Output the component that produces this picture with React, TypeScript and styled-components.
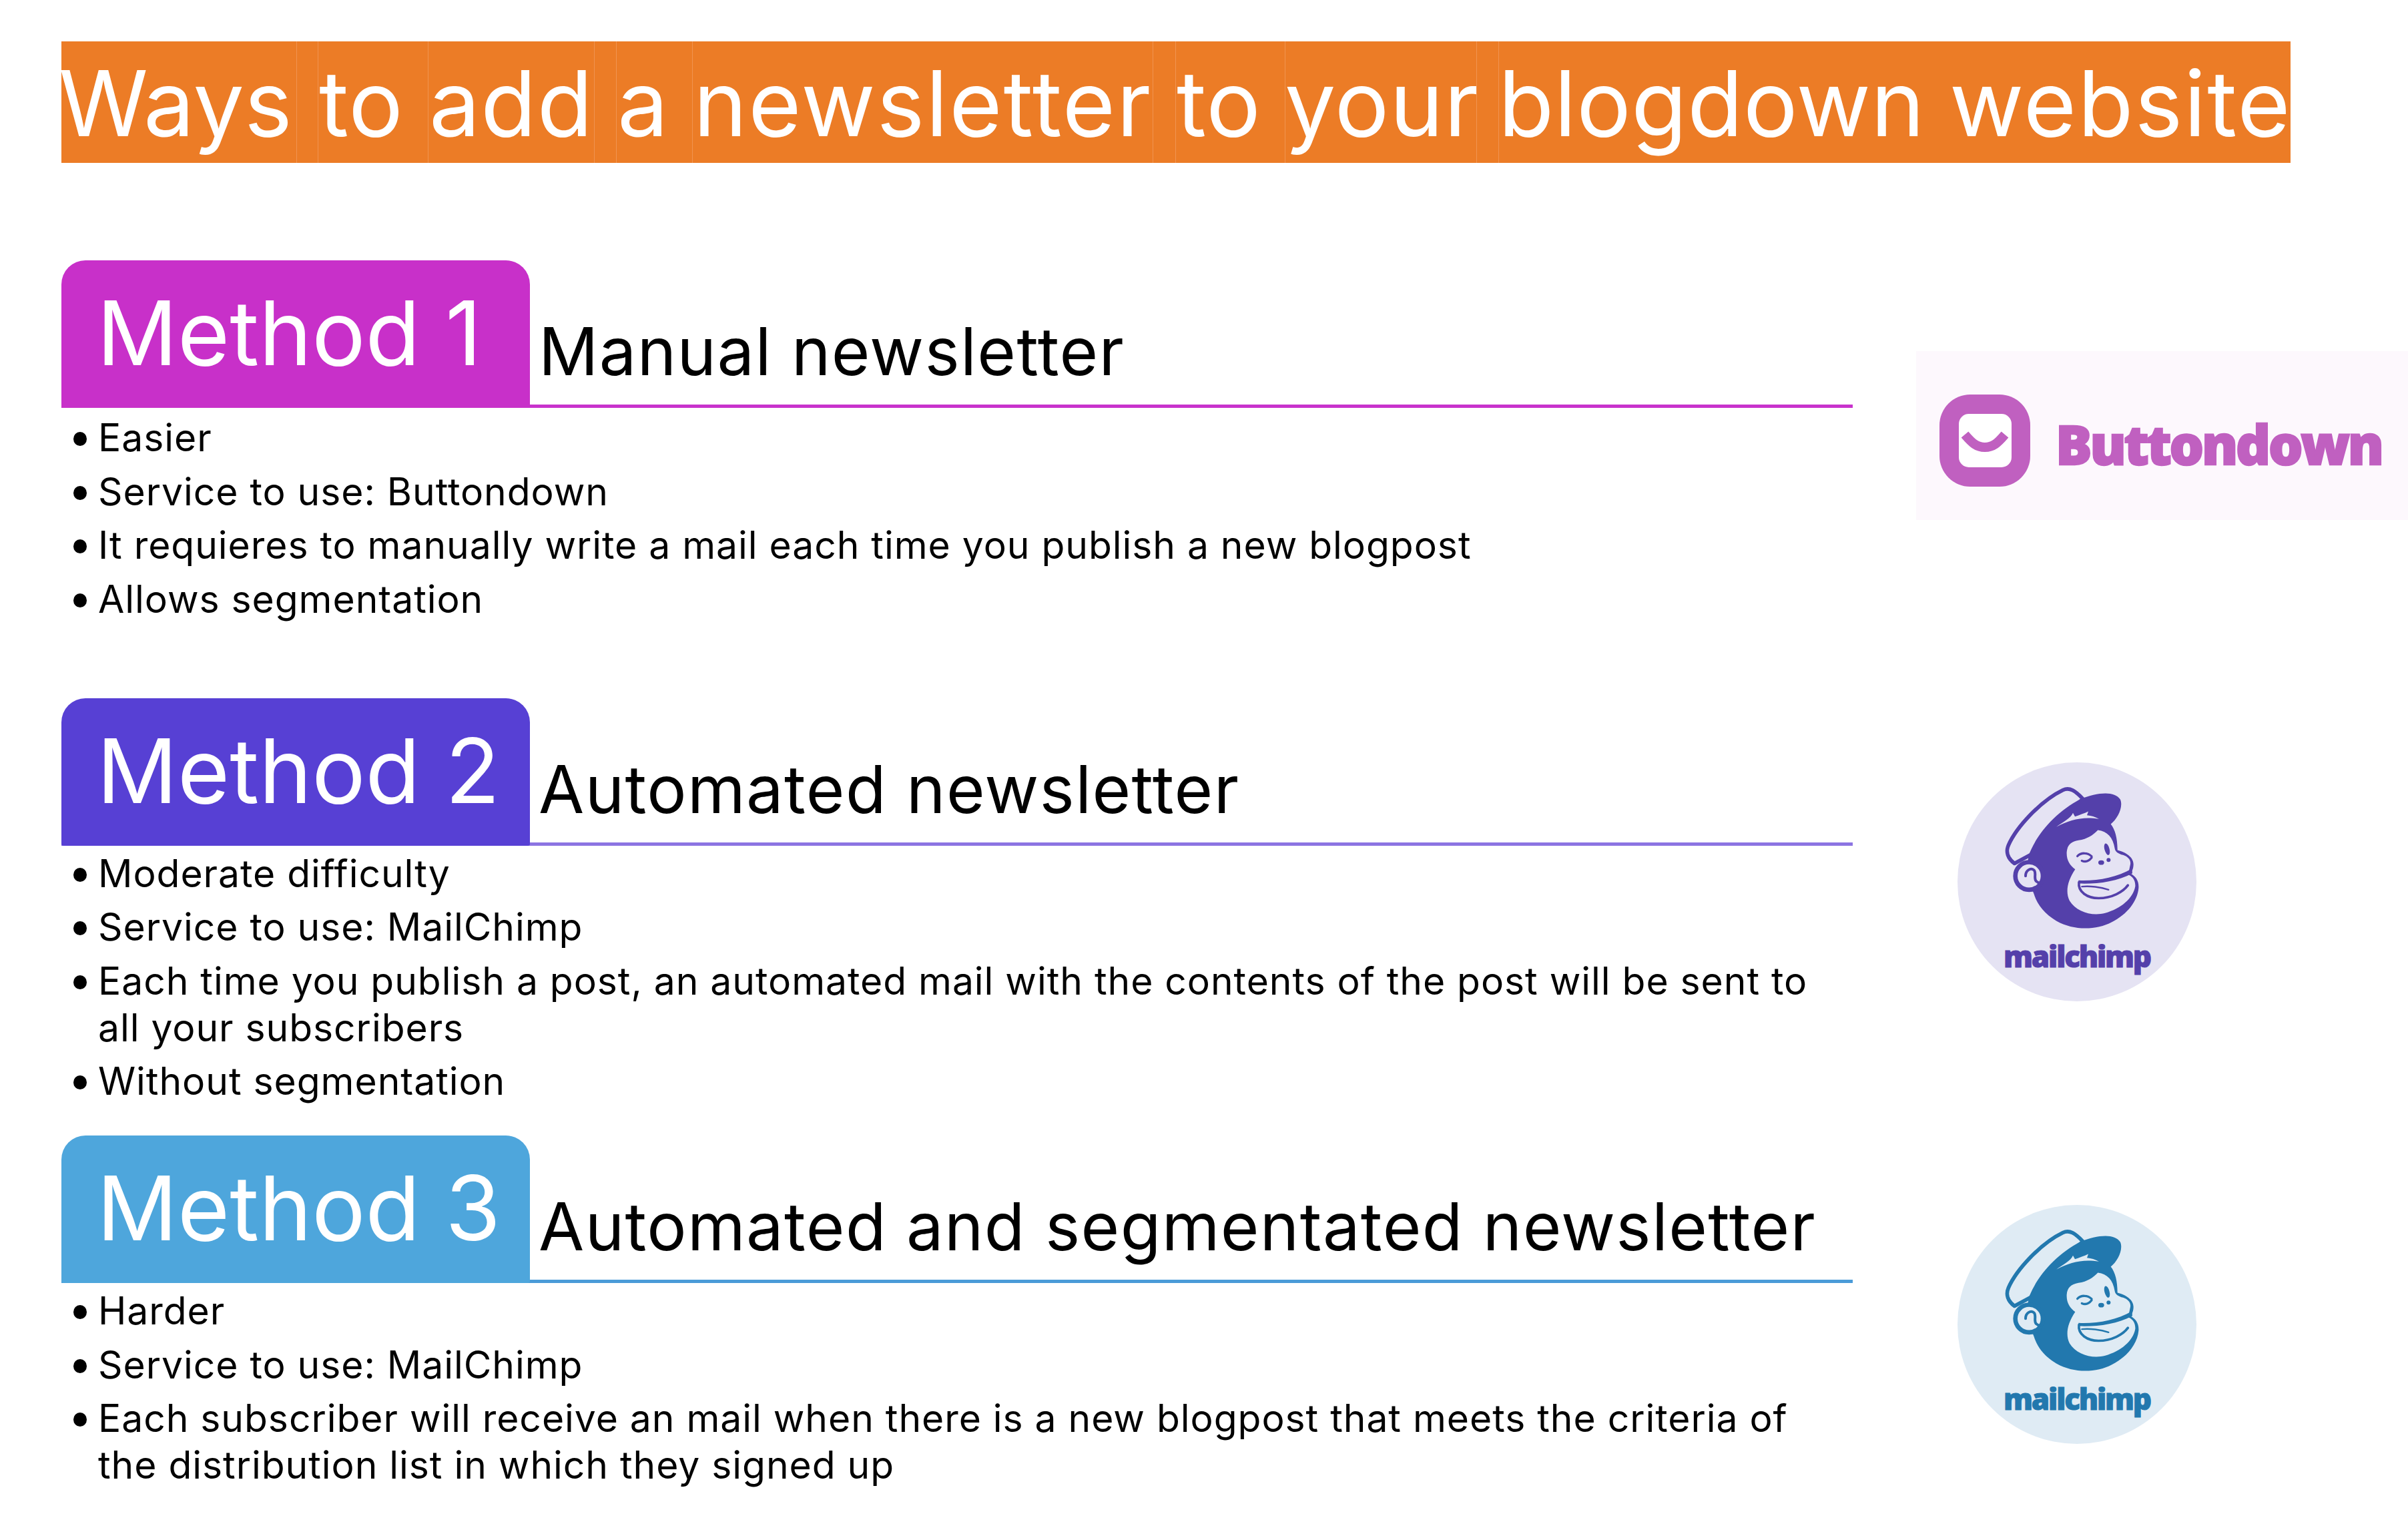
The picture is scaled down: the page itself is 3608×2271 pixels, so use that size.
import React from "react";
import styled, { createGlobalStyle } from "styled-components";

const Global = createGlobalStyle`
  html, body { margin: 0; padding: 0; background: #fff; }
  body { font-family: "Inter", "Noto Sans", sans-serif; color: #000; }
`;

const Slide = styled.main`
  width: 3608px;
  height: 2271px;
  overflow: hidden;
  padding: 62px 0 0 92px;
  box-sizing: border-box;
`;

const TitleBar = styled.h1`
  display: flex;
  width: 3340px;
  height: 182px;
  margin: 0 0 146px;
  background: #ec7c26;
  color: #fff;
  font-size: 136px;
  font-weight: 400;
  line-height: 186px;
  white-space: pre;
`;

const TitleWord = styled.span<{ $width: number; $ls: number; $indent?: number; $seam?: boolean }>`
  display: block;
  flex: none;
  width: ${(p) => p.$width}px;
  height: 182px;
  letter-spacing: ${(p) => p.$ls}px;
  text-indent: ${(p) => p.$indent ?? 0}px;
  box-shadow: ${(p) => (p.$seam === false ? "none" : "inset 1px 0 0 #f09350")};
`;

const Section = styled.section`
  display: grid;
  grid-template-columns: 2684px 832px;
  height: 655.5px;
`;

const Heading = styled.div<{ $rule: string }>`
  display: flex;
  height: 221px;
  box-sizing: border-box;
  border-bottom: 5px solid ${(p) => p.$rule};
`;

const Tab = styled.div<{ $bg: string }>`
  width: 702px;
  height: 221px;
  flex: none;
  box-sizing: border-box;
  padding-left: 53px;
  border-radius: 36px 36px 3px 3px;
  background: ${(p) => p.$bg};
  color: #fff;
  font-size: 134px;
  line-height: 216px;
  letter-spacing: 0;
  white-space: nowrap;
`;

const Subtitle = styled.h2`
  margin: 0 0 0 13px;
  padding-top: 71px;
  font-size: 99px;
  font-weight: 400;
  line-height: 130px;
  letter-spacing: 1.35px;
  white-space: nowrap;
`;

const BulletList = styled.ul<{ $top: number }>`
  width: 2600px;
  margin: ${(p) => p.$top}px 0 0;
  padding: 0 0 0 55px;
  list-style: none;
`;

const Bullet = styled.li`
  position: relative;
  font-size: 57px;
  line-height: 70px;
  margin-bottom: 10.5px;
  letter-spacing: 0.95px;
  &::before {
    content: "";
    position: absolute;
    left: -37px;
    top: 26px;
    width: 20px;
    height: 21px;
    border-radius: 50%;
    background: #000;
  }
`;

const LogoCell = styled.div<{ $top: number }>`
  display: flex;
  align-items: flex-start;
  padding-top: ${(p) => p.$top}px;
`;

const ButtondownCard = styled.div`
  display: flex;
  align-items: flex-start;
  width: 737px;
  height: 253px;
  margin-left: 95px;
  padding: 65px 0 0 35px;
  box-sizing: border-box;
  gap: 38px;
  background: #fdf8fd;
`;

const ButtondownName = styled.span`
  color: #c060c0;
  font-family: "Open Sans", "Noto Sans", sans-serif;
  font-size: 81px;
  font-weight: 800;
  letter-spacing: -3.2px;
  line-height: 81px;
  margin-top: 33px;
  -webkit-text-stroke: 2.5px #c060c0;
`;

const MailchimpBadge = styled.div<{ $bg: string; $ink: string }>`
  display: flex;
  flex-direction: column;
  align-items: center;
  width: 358px;
  height: 358px;
  margin-left: 157px;
  border-radius: 50%;
  background: ${(p) => p.$bg};
  color: ${(p) => p.$ink};
`;

const Wordmark = styled.span`
  font-family: "Open Sans", "Noto Sans", sans-serif;
  font-size: 44px;
  font-weight: 800;
  letter-spacing: -2.2px;
  line-height: 44px;
  margin-top: 12px;
  -webkit-text-stroke: 1px currentColor;
`;

const MonkeySvg = styled.svg`
  display: block;
  width: 210px;
  height: 222px;
  margin: 34px 13px 0 0;
  flex: none;
`;

const ButtondownSvg = styled.svg`
  display: block;
  width: 136px;
  height: 138px;
  flex: none;
`;

function ButtondownIcon() {
  return (
    <ButtondownSvg viewBox="0 0 136 138">
      <rect width="136" height="138" rx="46" fill="#c060c0" />
      <rect x="29" y="29" width="79" height="80" rx="15" fill="#fff" />
      <path d="M38 60 C49 73 56 79 68 79 C80 79 87 73 98 60" fill="none" stroke="#c060c0" strokeWidth="14" />
    </ButtondownSvg>
  );
}

function Monkey({ ink, bg }: { ink: string; bg: string }) {
  return (
    <MonkeySvg viewBox="300 170 630 665">
      <path d="M352 522 C322 500 312 470 325 440 C360 360 470 240 570 192 C600 178 625 195 660 232 L560 320 L430 480 Z" fill={bg} stroke={ink} strokeWidth="17" strokeLinejoin="round" />
      <path d="M650 232 C720 205 800 192 828 235 C842 270 815 322 785 345 C805 370 815 410 815 462 C855 472 887 495 887 525 C887 545 880 560 873 566 C898 580 912 600 910 632 C905 690 860 750 790 785 C720 822 620 825 540 780 C490 750 455 710 440 660 L400 560 L420 475 C460 380 540 290 650 232 Z" fill={ink} />
      <path d="M540 358 C570 335 605 320 615 295 L624 311 C645 304 665 297 684 288 L678 305 C697 307 715 312 732 322 C660 310 600 325 540 358 Z" fill={bg} />
      <path d="M587 470 C590 440 605 425 640 418 C680 412 705 395 727 372 C770 378 795 405 803 455 C805 470 820 478 840 484 C865 492 878 510 872 530 C868 550 866 560 862 572 C880 578 897 595 895 625 C885 680 830 725 760 745 C700 760 630 740 600 690 C580 650 590 600 625 548 C600 530 585 505 587 470 Z" fill={bg} />
      <ellipse cx="768" cy="458" rx="11" ry="27" transform="rotate(-15 768 458)" fill={ink} />
      <ellipse cx="742" cy="518" rx="13" ry="10" fill={ink} />
      <circle cx="775" cy="506" r="9" fill={ink} />
      <path d="M635 489 C650 472 682 472 699 490 M655 510 C672 517 688 510 699 496" fill="none" stroke={ink} strokeWidth="10" strokeLinecap="round" />
      <path d="M640 598 C720 602 810 585 880 545 L882 566 C810 605 720 615 640 612 Z" fill={ink} />
      <path d="M642 606 C636 650 680 678 730 678 C790 678 840 650 862 620" fill="none" stroke={ink} strokeWidth="11" strokeLinecap="round" />
      <path d="M655 626 C690 622 740 628 775 640" fill="none" stroke={ink} strokeWidth="7" strokeLinecap="round" />
      <circle cx="418" cy="578" r="62" fill={bg} stroke={ink} strokeWidth="20" />
      <path d="M402 578 C402 552 425 540 440 552 C452 565 437 590 450 602 C456 608 462 610 468 610" fill="none" stroke={ink} strokeWidth="12" strokeLinecap="round" />
    </MonkeySvg>
  );
}

const titleCells: { text: string; width: number; ls: number; indent?: number; seam?: boolean }[] = [
  { text: "Ways", width: 352, ls: 0, indent: -4, seam: false },
  { text: " ", width: 32, ls: 0 },
  { text: "to ", width: 165, ls: 1, indent: 2 },
  { text: "add", width: 249, ls: 1, indent: 2 },
  { text: " ", width: 33, ls: 0 },
  { text: "a ", width: 114, ls: 1, indent: 2 },
  { text: "newsletter", width: 690, ls: 2, indent: 2 },
  { text: " ", width: 34, ls: 0 },
  { text: "to ", width: 164, ls: 1, indent: 2 },
  { text: "your", width: 287, ls: 1 },
  { text: " ", width: 33, ls: 0 },
  { text: "blogdown", width: 676, ls: 0.5 },
  { text: "website", width: 511, ls: 2, seam: false },
];

export default function App() {
  return (
    <>
      <Global />
      <Slide>
        <TitleBar>
          {titleCells.map((c, i) => (
            <TitleWord key={i} $width={c.width} $ls={c.ls} $indent={c.indent} $seam={c.seam}>
              {c.text}
            </TitleWord>
          ))}
        </TitleBar>

        <Section>
          <div>
            <Heading $rule="#c832cc">
              <Tab $bg="#c830c9">Method 1</Tab>
              <Subtitle>Manual newsletter</Subtitle>
            </Heading>
            <BulletList $top={10}>
              <Bullet>Easier</Bullet>
              <Bullet>Service to use: Buttondown</Bullet>
              <Bullet>It requieres to manually write a mail each time you publish a new blogpost</Bullet>
              <Bullet>Allows segmentation</Bullet>
            </BulletList>
          </div>
          <LogoCell $top={136}>
            <ButtondownCard>
              <ButtondownIcon />
              <ButtondownName>Buttondown</ButtondownName>
            </ButtondownCard>
          </LogoCell>
        </Section>

        <Section>
          <div>
            <Heading $rule="#8c74e2">
              <Tab $bg="#5740d4">Method 2</Tab>
              <Subtitle>Automated newsletter</Subtitle>
            </Heading>
            <BulletList $top={7}>
              <Bullet>Moderate difficulty</Bullet>
              <Bullet>Service to use: MailChimp</Bullet>
              <Bullet>Each time you publish a post, an automated mail with the contents of the post will be sent to all your subscribers</Bullet>
              <Bullet>Without segmentation</Bullet>
            </BulletList>
          </div>
          <LogoCell $top={96}>
            <MailchimpBadge $bg="#e5e3f3" $ink="#5440aa">
              <Monkey ink="#5440aa" bg="#e5e3f3" />
              <Wordmark>mailchimp</Wordmark>
            </MailchimpBadge>
          </LogoCell>
        </Section>

        <Section>
          <div>
            <Heading $rule="#4a9bd8">
              <Tab $bg="#4ea6dc">Method 3</Tab>
              <Subtitle>Automated and segmentated newsletter</Subtitle>
            </Heading>
            <BulletList $top={7}>
              <Bullet>Harder</Bullet>
              <Bullet>Service to use: MailChimp</Bullet>
              <Bullet>Each subscriber will receive an mail when there is a new blogpost that meets the criteria of the distribution list in which they signed up</Bullet>
            </BulletList>
          </div>
          <LogoCell $top={104}>
            <MailchimpBadge $bg="#dfebf4" $ink="#2278ae">
              <Monkey ink="#2278ae" bg="#dfebf4" />
              <Wordmark>mailchimp</Wordmark>
            </MailchimpBadge>
          </LogoCell>
        </Section>
      </Slide>
    </>
  );
}
